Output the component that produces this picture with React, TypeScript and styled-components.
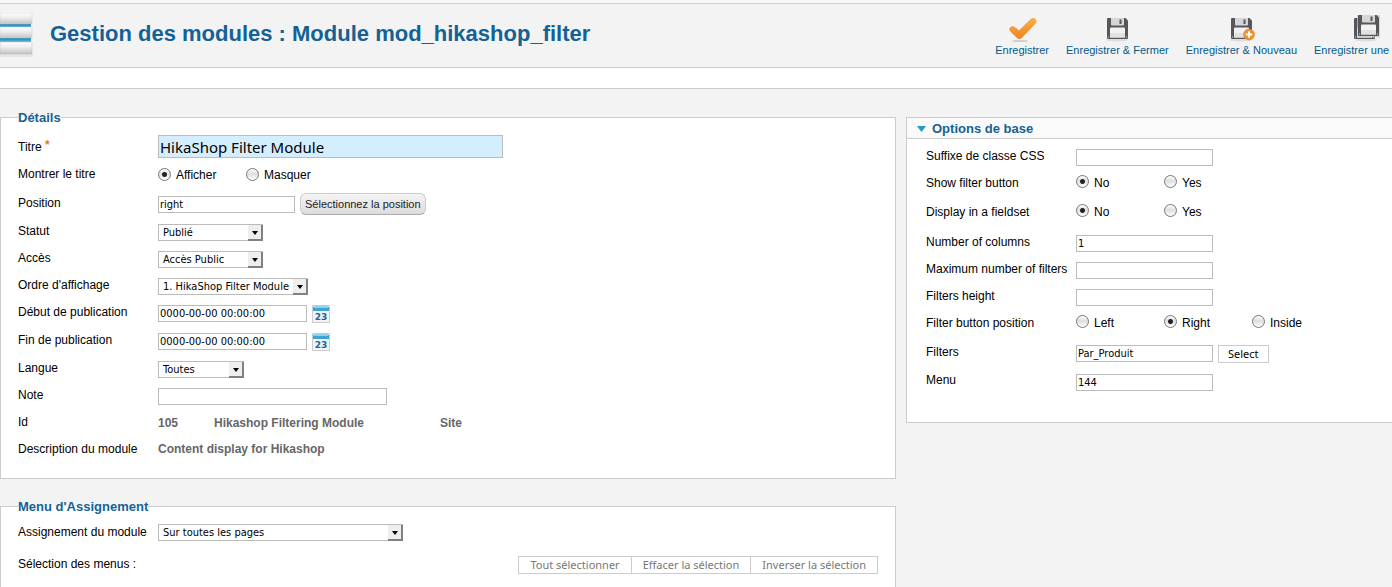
import React, { useId } from 'react';
import styled, { createGlobalStyle } from 'styled-components';

const sans = '"Liberation Sans", Arial, sans-serif';
const humanist = '"Noto Sans", "Lucida Grande", sans-serif';
const fieldFont = '"DejaVu Sans Condensed", "Noto Sans", sans-serif';

const GlobalStyle = createGlobalStyle`
  *, *::before, *::after { box-sizing: border-box; }
  body {
    margin: 0;
    background: #f3f3f3;
    color: #000;
    font: 12px/16px ${sans};
  }
`;

const Page = styled.div`
  display: flex;
  flex-direction: column;
  min-height: 100vh;
  overflow: hidden;
`;

const TopStrip = styled.div`
  height: 3px;
  background: #f9f9f9;
`;

const Header = styled.header`
  display: flex;
  align-items: center;
  height: 65px;
  border: solid #ccc;
  border-width: 1px 0;
  overflow: hidden;
`;

const PageTitle = styled.h1`
  flex: 1;
  margin: 0 0 4px 14px;
  color: #146295;
  font-size: 22px;
  line-height: 28px;
  font-weight: bold;
  white-space: nowrap;
`;

const Toolbar = styled.nav`
  display: flex;
  gap: 17px;
  margin-right: -26px;
`;

const ToolButton = styled.button<{ $width?: number }>`
  display: flex;
  flex-direction: column;
  align-items: center;
  width: ${(p) => (p.$width ? `${p.$width}px` : 'auto')};
  padding: 0;
  border: 0;
  background: none;
  color: #025a8d;
  font: 11px/14px ${sans};
  white-space: nowrap;
  cursor: pointer;

  span { align-self: stretch; text-align: left; }
`;

const SubBar = styled.div`
  height: 21px;
  background: #fff;
  border-bottom: 1px solid #ccc;
`;

const Main = styled.main`
  flex: 1;
  display: grid;
  grid-template-columns: minmax(0, 1fr) 486px;
  gap: 10px;
  padding-top: 20px;
`;

const Column = styled.div`
  display: flex;
  flex-direction: column;
  gap: 19px;
`;

const Group = styled.fieldset<{ $open?: boolean }>`
  flex: ${(p) => (p.$open ? '1' : 'none')};
  min-width: 0;
  margin: 0;
  padding: 7px 17px 16px;
  border: 1px solid #ccc;
  border-bottom-width: ${(p) => (p.$open ? '0' : '1px')};
  background: #fff;
`;

const Legend = styled.legend`
  padding: 1px 0 0;
  color: #146295;
  font-size: 13px;
  line-height: 16px;
  font-weight: bold;
`;

const RowBox = styled.div<{ $height: number; $after: number; $label: number }>`
  display: grid;
  grid-template-columns: ${(p) => p.$label}px minmax(0, 1fr);
  align-items: center;
  height: ${(p) => p.$height}px;
  margin-bottom: ${(p) => p.$after}px;
`;

const RowLabel = styled.label<{ $raise: number }>`
  padding-bottom: ${(p) => p.$raise}px;
  white-space: nowrap;
`;

const Required = styled.span`
  color: #e77b1c;
  font-weight: bold;
  line-height: 0;
  vertical-align: 2px;
`;

const Controls = styled.div<{ $top?: boolean }>`
  display: flex;
  align-items: ${(p) => (p.$top ? 'flex-start' : 'center')};
  gap: 5px;
`;

const TextInput = styled.input<{ $width: number; $title?: boolean }>`
  width: ${(p) => p.$width}px;
  height: ${(p) => (p.$title ? 23 : 17)}px;
  padding: 0 1px;
  border: 1px solid #bbb;
  border-radius: 0;
  outline: 0;
  background: ${(p) => (p.$title ? '#d5eeff' : '#fff')};
  color: #000;
  font: ${(p) => (p.$title ? `15px/20px ${humanist}` : `11px/15px ${fieldFont}`)};
`;

const SelectBox = styled.span<{ $width: number }>`
  position: relative;
  display: flex;
  width: ${(p) => p.$width}px;
  height: 17px;

  &::before {
    content: '';
    position: absolute;
    top: 1px;
    right: 0;
    width: 15px;
    height: 16px;
    border: solid #808080;
    border-width: 0 2px 2px 0;
    background: #eee;
    pointer-events: none;
  }

  &::after {
    content: '';
    position: absolute;
    top: 7px;
    right: 5px;
    border: 3px solid transparent;
    border-top: 4px solid #000;
    border-bottom: 0;
    pointer-events: none;
  }
`;

const NativeSelect = styled.select`
  appearance: none;
  width: 100%;
  padding: 0 15px 0 4px;
  border: 1px solid #bbb;
  border-radius: 0;
  background: #fff;
  color: #000;
  font: 11px/15px ${fieldFont};
`;

const RadioOption = styled.label`
  display: flex;
  align-items: center;
  gap: 5px;
  width: 83px;
`;

const RadioInput = styled.input`
  appearance: none;
  flex: none;
  width: 13px;
  height: 13px;
  margin: 0 0 2px;
  border: 1px solid #777;
  border-radius: 50%;
  background: linear-gradient(#fff, #dedede 45%, #fff);

  &:checked {
    background: radial-gradient(circle, #222 0 2px, transparent 3px),
      linear-gradient(#fff, #dedede 45%, #fff);
  }
`;

const PillButton = styled.button`
  height: 22px;
  margin-bottom: 2px;
  padding: 0 4px;
  border: 1px solid #ccc;
  border-bottom-color: #aaa;
  border-radius: 6px;
  background: linear-gradient(#f5f5f5, #dcdcdc);
  color: #222;
  font: 11px/18px ${sans};
`;

const FlatButton = styled.button<{ $muted?: boolean }>`
  height: 18px;
  padding: 0 ${(p) => (p.$muted ? 11 : 9)}px;
  border: 1px solid #ccc;
  background: #fff;
  color: ${(p) => (p.$muted ? '#777' : '#000')};
  font: 11px/16px ${humanist};
  white-space: nowrap;

  & + & { margin-left: -1px; }
`;

const ButtonStrip = styled.div`
  display: flex;
  justify-content: flex-end;
`;

const IconButton = styled.button`
  display: flex;
  padding: 0;
  border: 0;
  background: none;
`;

const Readings = styled.div`
  display: grid;
  grid-template-columns: 56px 226px auto;
  justify-content: start;
  color: #666;
  font-weight: bold;
`;

const Reading = styled.strong`
  color: #666;
`;

const Panel = styled.section`
  align-self: start;
  margin-top: 8px;
  border: 1px solid #ccc;
  border-right: 0;
  background: #fff;
`;

const PanelTitle = styled.h2`
  display: flex;
  align-items: center;
  gap: 6px;
  height: 21px;
  margin: 0;
  padding: 2px 0 0 10px;
  border-bottom: 1px solid #ccc;
  background: #fafafa;
  color: #146295;
  font-size: 13px;
  line-height: 18px;
`;

const PanelBody = styled.div`
  padding: 5px 19px 26px;
`;

function Row({ label, id, height = 27, after = 0, labelWidth = 140, raise = 4, required, children }: {
  label: string;
  id?: string;
  height?: number;
  after?: number;
  labelWidth?: number;
  raise?: number;
  required?: boolean;
  children: React.ReactNode;
}) {
  return (
    <RowBox $height={height} $after={after} $label={labelWidth}>
      <RowLabel htmlFor={id} as={id ? 'label' : 'span'} $raise={raise}>
        {label}
        {required && <Required> *</Required>}
      </RowLabel>
      {children}
    </RowBox>
  );
}

function TextRow({ label, value = '', width = 137, height, labelWidth, title, required, top, extra }: {
  label: string;
  value?: string;
  width?: number;
  height?: number;
  labelWidth?: number;
  title?: boolean;
  required?: boolean;
  top?: boolean;
  extra?: React.ReactNode;
}) {
  const id = useId();
  return (
    <Row label={label} id={id} height={height} labelWidth={labelWidth} raise={title ? 0 : 4} required={required}>
      <Controls $top={top}>
        <TextInput id={id} $width={width} $title={title} defaultValue={value} />
        {extra}
      </Controls>
    </Row>
  );
}

function SelectRow({ label, value, width, height, raise }: {
  label: string;
  value: string;
  width: number;
  height?: number;
  raise?: number;
}) {
  const id = useId();
  return (
    <Row label={label} id={id} height={height} raise={raise}>
      <SelectBox $width={width}>
        <NativeSelect id={id}>
          <option>{value}</option>
        </NativeSelect>
      </SelectBox>
    </Row>
  );
}

function RadioRow({ label, options, checked, height, after, labelWidth, raise = 0 }: {
  label: string;
  options: string[];
  checked: string;
  height: number;
  after?: number;
  labelWidth?: number;
  raise?: number;
}) {
  const name = useId();
  return (
    <Row label={label} height={height} after={after} labelWidth={labelWidth} raise={raise}>
      <Controls role="radiogroup" aria-label={label}>
        {options.map((o) => (
          <RadioOption key={o}>
            <RadioInput type="radio" name={name} defaultChecked={o === checked} />
            {o}
          </RadioOption>
        ))}
      </Controls>
    </Row>
  );
}

function ModulesLogo() {
  return (
    <svg width="36" height="46" viewBox="0 0 36 46" aria-hidden="true">
      <defs>
        <linearGradient id="bar" x1="0" y1="0" x2="0" y2="1">
          <stop offset="0" stopColor="#fff" />
          <stop offset="0.45" stopColor="#ececec" />
          <stop offset="1" stopColor="#c2c2c4" />
        </linearGradient>
        <linearGradient id="gap" x1="0" y1="0" x2="0" y2="1">
          <stop offset="0" stopColor="#1c7fab" />
          <stop offset="1" stopColor="#55b9de" />
        </linearGradient>
      </defs>
      <path d="M0 41h34l-3 3H0z" fill="#ddd" opacity="0.7" />
      <rect y="11" width="31" height="4" fill="url(#gap)" />
      <rect y="25" width="31" height="4" fill="url(#gap)" />
      <rect y="0" width="32" height="11" fill="url(#bar)" stroke="#ccc" strokeWidth="0.5" />
      <rect y="14" width="32" height="11" fill="url(#bar)" stroke="#ccc" strokeWidth="0.5" />
      <rect y="29" width="32" height="12" fill="url(#bar)" stroke="#bbb" strokeWidth="0.5" />
    </svg>
  );
}

function CheckIcon() {
  return (
    <svg width="32" height="28" viewBox="0 0 32 28" aria-hidden="true">
      <defs>
        <linearGradient id="orange" x1="0" y1="0" x2="0" y2="1">
          <stop offset="0" stopColor="#f9b04a" />
          <stop offset="1" stopColor="#ee8420" />
        </linearGradient>
      </defs>
      <ellipse cx="14" cy="26" rx="8" ry="1" fill="#ccc" />
      <path d="M4 12.500C5.300 10.800 7.600 10.800 9.200 12.300L13 15.600L24.300 4.300C26 2.700 28.200 2.600 29.500 3.900C31 5.300 30.700 7.400 29.300 8.900L16 22.800C14.400 24.400 12.300 24.400 10.800 22.800L4.400 16.500C3.200 15.300 3.100 13.700 4 12.500Z" fill="url(#orange)" />
    </svg>
  );
}

function Disk() {
  return (
    <>
      <path d="M0 1Q0 0 1 0H18.500L21 2.500V20Q21 21 20 21H1Q0 21 0 20Z" fill="#55575a" />
      <path d="M4 0H17V6.500Q17 7.500 16 7.500H5Q4 7.500 4 6.500Z" fill="#d6d6d6" />
      <rect x="12.500" y="1.500" width="2" height="4.500" fill="#55575a" />
      <path d="M3 10.500Q3 9.500 4 9.500H17Q18 9.500 18 10.500V19.500H3Z" fill="#f2f2f2" />
      <path d="M3 15H18V19.500H3Z" fill="#e2e2e2" />
      <path d="M1 18.500h1v1H1zM19 18.500h1v1h-1z" fill="#ddd" />
    </>
  );
}

function SaveIcon({ kind }: { kind: 'single' | 'plus' | 'copy' }) {
  return (
    <svg width="32" height="28" viewBox="0 0 32 28" aria-hidden="true">
      <ellipse cx="16" cy="25" rx="11" ry="1.500" fill="#ddd" />
      {kind === 'copy' ? (
        <>
          <g transform="translate(4 3)"><Disk /></g>
          <path d="M7 0H30V22.500H7Z" fill="#c9cacb" opacity="0.700" />
          <g transform="translate(8 0)"><Disk /></g>
        </>
      ) : (
        <g transform="translate(6 3)"><Disk /></g>
      )}
      {kind === 'plus' && (
        <>
          <circle cx="24" cy="19.500" r="5.500" fill="#f0922b" stroke="#e07c18" strokeWidth="0.500" />
          <path d="M24 16.300V22.700M20.800 19.500H27.200" stroke="#fff" strokeWidth="2" />
        </>
      )}
    </svg>
  );
}

function CalendarIcon() {
  return (
    <svg width="18" height="18" viewBox="0 0 18 18" aria-hidden="true">
      <rect x="0.500" y="0.500" width="17" height="17" fill="#f1f3f4" stroke="#ccc" />
      <rect x="1" y="2" width="16" height="4" fill="#3ba4d8" />
      <rect x="2" y="1" width="14" height="2" fill="#8fd0ef" />
      <text x="9" y="15" textAnchor="middle" fill="#14689c" fontFamily="DejaVu Sans, sans-serif" fontWeight="bold" fontSize="9">23</text>
    </svg>
  );
}

function DateRow({ label }: { label: string }) {
  return (
    <TextRow
      label={label}
      value="0000-00-00 00:00:00"
      width={149}
      height={28}
      top
      extra={<IconButton type="button" aria-label={label}><CalendarIcon /></IconButton>}
    />
  );
}

export default function App() {
  return (
    <Page>
      <GlobalStyle />
      <TopStrip />
      <Header>
        <ModulesLogo />
        <PageTitle>Gestion des modules : Module mod_hikashop_filter</PageTitle>
        <Toolbar>
          <ToolButton><CheckIcon /><span>Enregistrer</span></ToolButton>
          <ToolButton><SaveIcon kind="single" /><span>Enregistrer &amp; Fermer</span></ToolButton>
          <ToolButton><SaveIcon kind="plus" /><span>Enregistrer &amp; Nouveau</span></ToolButton>
          <ToolButton $width={104}><SaveIcon kind="copy" /><span>Enregistrer une</span></ToolButton>
        </Toolbar>
      </Header>
      <SubBar />
      <Main>
        <Column>
          <Group>
            <Legend>Détails</Legend>
            <TextRow label="Titre" required title value="HikaShop Filter Module" width={345} />
            <RadioRow label="Montrer le titre" options={['Afficher', 'Masquer']} checked="Afficher" height={30} raise={2} />
            <TextRow label="Position" value="right" height={29} extra={<PillButton type="button">Sélectionnez la position</PillButton>} />
            <SelectRow label="Statut" value="Publié" width={105} />
            <SelectRow label="Accès" value="Accès Public" width={105} />
            <SelectRow label="Ordre d'affichage" value="1. HikaShop Filter Module" width={150} />
            <DateRow label="Début de publication" />
            <DateRow label="Fin de publication" />
            <SelectRow label="Langue" value="Toutes" width={86} />
            <TextRow label="Note" width={229} />
            <Row label="Id" height={26} raise={2}>
              <Readings>
                <span>105</span>
                <span>Hikashop Filtering Module</span>
                <span>Site</span>
              </Readings>
            </Row>
            <Row label="Description du module" height={26} raise={0}>
              <Reading>Content display for Hikashop</Reading>
            </Row>
          </Group>
          <Group $open>
            <Legend>Menu d'Assignement</Legend>
            <SelectRow label="Assignement du module" value="Sur toutes les pages" width={245} height={21} raise={2} />
            <Row label="Sélection des menus :" height={44} raise={2}>
              <ButtonStrip>
                <FlatButton type="button" $muted>Tout sélectionner</FlatButton>
                <FlatButton type="button" $muted>Effacer la sélection</FlatButton>
                <FlatButton type="button" $muted>Inverser la sélection</FlatButton>
              </ButtonStrip>
            </Row>
          </Group>
        </Column>
        <Panel>
          <PanelTitle>
            <svg width="9" height="6" viewBox="0 0 9 6" aria-hidden="true">
              <path d="M0 0H9L4.500 6Z" fill="#1f9cc7" />
            </svg>
            Options de base
          </PanelTitle>
          <PanelBody>
            <TextRow label="Suffixe de classe CSS" labelWidth={150} />
            <RadioRow label="Show filter button" options={['No', 'Yes']} checked="No" height={23} after={6} labelWidth={150} />
            <RadioRow label="Display in a fieldset" options={['No', 'Yes']} checked="No" height={23} after={7} labelWidth={150} />
            <TextRow label="Number of columns" value="1" labelWidth={150} />
            <TextRow label="Maximum number of filters" labelWidth={150} />
            <TextRow label="Filters height" labelWidth={150} />
            <RadioRow label="Filter button position" options={['Left', 'Right', 'Inside']} checked="Right" height={23} after={6} labelWidth={150} />
            <TextRow label="Filters" value="Par_Produit" height={28} labelWidth={150} top extra={<FlatButton type="button">Select</FlatButton>} />
            <TextRow label="Menu" value="144" height={28} labelWidth={150} />
          </PanelBody>
        </Panel>
      </Main>
    </Page>
  );
}
